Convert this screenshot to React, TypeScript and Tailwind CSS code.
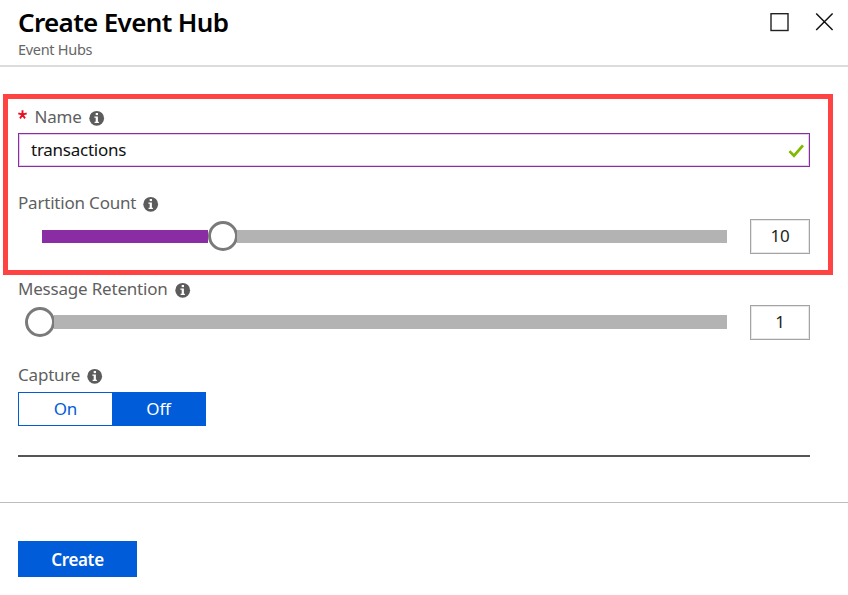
import type { ReactNode } from "react";

function InfoIcon() {
  return (
    <svg width="16" height="16" viewBox="0 0 16 16" className="mt-[5px] shrink-0">
      <circle cx="7.7" cy="8.3" r="7.4" fill="#5c5c5c" />
      <rect x="6.7" y="3" width="2.3" height="2.1" fill="#fff" />
      <path d="M5.4 6.6h3.5v5.2h1v1.2H5.6v-1.2h1.1V7.8H5.4z" fill="#fff" />
    </svg>
  );
}

function Label({ text, required }: { text: string; required?: boolean }) {
  return (
    <div className="flex h-6 text-[17px] leading-6 tracking-[-0.2px] text-[#5f5f5f]">
      {required && (
        <svg width="9" height="9" viewBox="0 0 9 9" className="mt-[5px] mr-[7.5px] shrink-0">
          <path d="M4.5 4.7V.2M4.5 4.7L.3 3.3M4.5 4.7L8.7 3.3M4.5 4.7L2 8.4M4.5 4.7L7 8.4" stroke="#e81123" strokeWidth="1.9" fill="none" />
        </svg>
      )}
      <span className="mr-[7px] shrink-0 whitespace-nowrap">{text}</span>
      <InfoIcon />
    </div>
  );
}

function Slider({ value, children }: { value: number; children: ReactNode }) {
  return (
    <div className="flex h-[35px] w-[792px] items-center">
      <div className="flex h-[35px] w-[709px] items-center pb-px pl-[7px]">
        {children}
      </div>
      <div className="ml-[23px] flex h-[35px] w-[60px] items-center justify-center border border-[#a3a3a3] pb-px text-[17px] tracking-[-0.2px] text-[#1f1f1f] shadow-[inset_0_0_0_1px_#e8e8e8]">
        {value}
      </div>
    </div>
  );
}

function Thumb() {
  return <div className="-mt-px size-[30px] shrink-0 rounded-full border-3 border-[#7a7a7a] bg-white" />;
}

export default function App() {
  return (
    <div className="flex h-[595px] w-[848px] flex-col overflow-hidden bg-white font-['Noto_Sans','Open_Sans',sans-serif]">
      <header className="flex h-[67px] shrink-0 justify-between border-b-2 border-[#dcdcdc] pr-[14px] pl-[18px]">
        <div className="pt-[6px]">
          <h1 className="text-[26px] leading-8 font-semibold tracking-[-0.65px] whitespace-nowrap text-black">Create Event Hub</h1>
          <p className="text-[14.5px] leading-[22px] tracking-[-0.3px] text-[#666]">Event Hubs</p>
        </div>
        <div className="flex gap-[25px] pt-3">
          <svg width="20" height="20" viewBox="0 0 20 20">
            <rect x="2" y="1.7" width="17" height="16.8" fill="none" stroke="#222" strokeWidth="1.4" />
          </svg>
          <svg width="20" height="20" viewBox="0 0 20 20">
            <path d="M2.2 1.5L18.6 18M18.6 1.5L2.2 18" stroke="#111" strokeWidth="1.5" />
          </svg>
        </div>
      </header>

      <section className="mt-[27px] ml-[3px] h-[181px] w-[830px] shrink-0 border-5 border-[#ff4343] pt-[6px] pl-[10px]">
        <Label text="Name" required />
        <div className="mt-1 flex h-[34px] w-[792px] items-center justify-between border border-[#8a2da5] pr-[4px] pl-3 text-[17px] tracking-[-0.25px] text-[#111] shadow-[inset_0_0_0_1px_#e6cdec]">
          <span>transactions</span>
          <svg width="17" height="15" viewBox="0 0 17 15">
            <path d="M1.4 8.1L6 12.7L15 2.3" fill="none" stroke="#7fba00" strokeWidth="2.7" />
          </svg>
        </div>
        <div className="mt-6">
          <Label text="Partition Count" />
        </div>
        <div className="mt-1">
          <Slider value={10}>
            <div className="ml-[17px] h-[13px] w-[166px] bg-[#8a2da5]" />
            <Thumb />
            <div className="-ml-px h-[13px] flex-1 bg-[#b3b3b3]" />
          </Slider>
        </div>
      </section>

      <section className="w-[810px] shrink-0 pt-[2px] pl-[18px]">
        <Label text="Message Retention" />
        <div className="mt-1">
          <Slider value={1}>
            <Thumb />
            <div className="-ml-px h-[14px] flex-1 bg-[#b3b3b3]" />
          </Slider>
        </div>
        <div className="mt-[23px]">
          <Label text="Capture" />
        </div>
        <div className="mt-[5px] flex h-[34px] w-[188px] border border-[#015cda] text-[17px] leading-[32px] tracking-[-0.2px]">
          <div className="w-[93px] text-center text-[#015cda]">On</div>
          <div className="flex-1 bg-[#015cda] text-center text-white">Off</div>
        </div>
        <div className="mt-[29px] border-b-2 border-[#555]" />
      </section>

      <footer className="mt-[45px] border-t border-[#bcbcbc] pt-[38px] pl-[18px]">
        <button className="block h-[36px] w-[119px] bg-[#015cda] pt-px text-[17px] font-semibold tracking-[-0.35px] text-white">Create</button>
      </footer>
    </div>
  );
}
